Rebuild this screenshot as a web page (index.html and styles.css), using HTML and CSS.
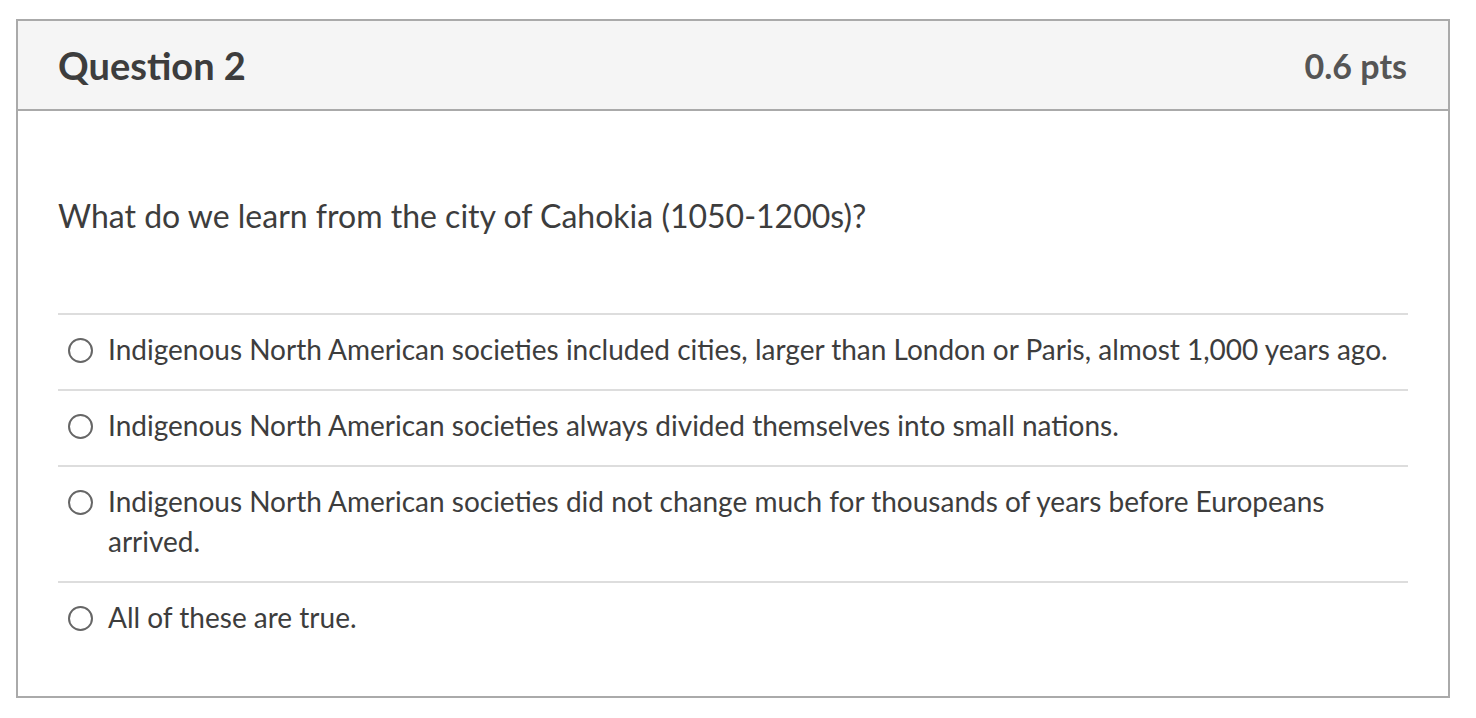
FILE: index.html
```html
<!DOCTYPE html>
<html>
<head>
<meta charset="utf-8">
<link rel="stylesheet" href="styles.css">
</head>
<body>
<div class="question">
  <div class="q-header">
    <h2 class="q-title">Question 2</h2>
    <span class="q-points">0.6 pts</span>
  </div>
  <div class="q-body">
    <p class="q-text">What do we learn from the city of Cahokia (1050-1200s)?</p>
    <ul class="answers">
      <li class="answer"><span class="radio"></span><span class="answer-text">Indigenous North American societies included cities, larger than London or Paris, almost 1,000 years ago.</span></li>
      <li class="answer"><span class="radio"></span><span class="answer-text">Indigenous North American societies always divided themselves into small nations.</span></li>
      <li class="answer"><span class="radio"></span><span class="answer-text">Indigenous North American societies did not change much for thousands of years before Europeans arrived.</span></li>
      <li class="answer"><span class="radio"></span><span class="answer-text">All of these are true.</span></li>
    </ul>
  </div>
</div>
</body>
</html>
```
FILE: styles.css
```css
html, body {
  margin: 0;
  padding: 0;
  background: #ffffff;
}
body {
  font-family: Lato, "Open Sans", sans-serif;
  color: #3d3d3d;
  padding: 19px 0 0 16px;
}
.question {
  width: 1434px;
  height: 679px;
  box-sizing: border-box;
  border: 2px solid #aaaaaa;
}
.q-header {
  height: 90px;
  box-sizing: border-box;
  background: #f5f5f5;
  border-bottom: 2px solid #aaaaaa;
  display: flex;
  align-items: center;
  justify-content: space-between;
  padding: 0 41px 0 40px;
}
.q-title {
  margin: 0;
  font-size: 38px;
  font-weight: 700;
  color: #3d3d3d;
}
.q-points {
  font-size: 34px;
  font-weight: 700;
  color: #555555;
}
.q-body {
  padding: 85px 40px 0 40px;
}
.q-text {
  margin: 0 0 77px 0;
  font-size: 32px;
  line-height: 40px;
}
.answers {
  list-style: none;
  margin: 0;
  padding: 0;
}
.answer {
  display: flex;
  align-items: flex-start;
  gap: 15px;
  border-top: 2px solid #dddddd;
  padding: 14px 0 20px 10px;
  font-size: 28px;
  line-height: 40px;
}
.radio {
  flex: none;
  width: 21px;
  height: 21px;
  border: 2px solid #666666;
  border-radius: 50%;
  margin-top: 9px;
}
.answer-text {
  flex: 1;
}
```
